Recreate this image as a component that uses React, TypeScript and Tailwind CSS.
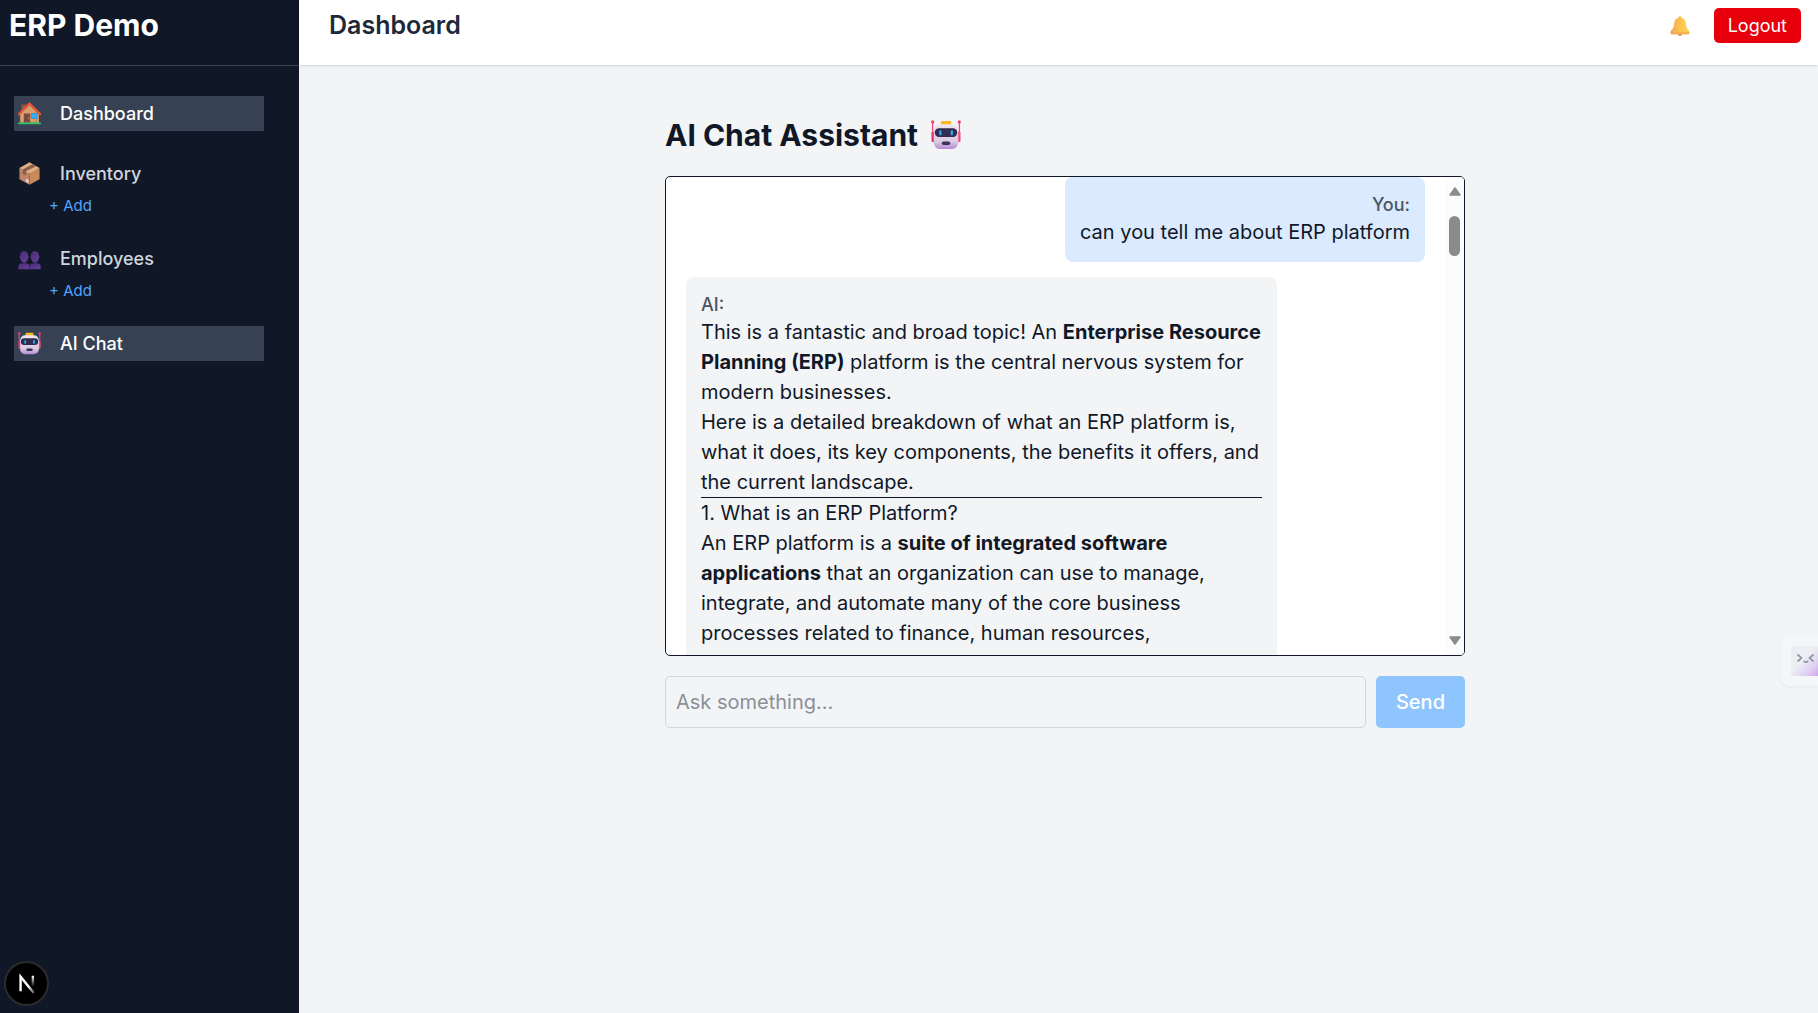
import React from "react";

function HouseIcon({ className }: { className: string }) {
  return (
    <svg viewBox="0 0 32 32" className={className} aria-hidden="true">
      <path d="M5 3h6v13H5z" fill="#8b5e45" />
      <path d="M4 3h8v2H4z" fill="#75483a" />
      <path d="M3 17 16 4l13 13v12H3z" fill="#d9a06f" />
      <path d="M16 4 29 17v12h-6V12z" fill="#cf9264" />
      <path d="M1 17 16 2l15 15" fill="none" stroke="#ee5335" strokeWidth="3" strokeLinecap="round" strokeLinejoin="round" />
      <path d="M8 16h9v13H8z" fill="#7c4a3d" />
      <circle cx="15" cy="23" r="1" fill="#d9a06f" />
      <rect x="19" y="16" width="7.5" height="7" fill="#38aef5" stroke="#2a8bdc" strokeWidth="1" />
      <rect y="28.5" x="0" width="32" height="2.5" rx="1.2" fill="#33c36a" />
    </svg>
  );
}

function BoxIcon({ className }: { className: string }) {
  return (
    <svg viewBox="0 0 32 32" className={className} aria-hidden="true">
      <path d="M2 8.5 16 15v16.5L2 24z" fill="#bd8468" />
      <path d="M30 8.5 16 15v16.5L30 24z" fill="#c88a58" />
      <path d="M16 .5 30 8.5 16 16 2 8.5z" fill="#e0b183" />
      <path d="M20 3 6.500 10.600v6l4.500 2.200v-6L25 5.800z" fill="#8a5d4c" />
      <path d="m11 23 4 2v4.500l-4-2z" fill="#e6ced4" />
    </svg>
  );
}

function PeopleIcon({ className }: { className: string }) {
  return (
    <svg viewBox="0 0 32 32" className={className} aria-hidden="true">
      <defs>
        <linearGradient id="bust" x1="0" x2="1" y1="0" y2="1">
          <stop offset="0" stopColor="#4b2d73" />
          <stop offset="1" stopColor="#65409a" />
        </linearGradient>
      </defs>
      <g fill="url(#bust)">
        <path d="M8.500 6C4.500 6 3 8.500 3 12c-1 0-1 4 .3 4 .7 4 2.700 6 5.200 6s4.500-2 5.200-6c1.300 0 1.300-4 .3-4 0-3.500-1.500-6-5.500-6z" />
        <path d="M23.500 6C19.500 6 18 8.500 18 12c-1 0-1 4 .3 4 .7 4 2.700 6 5.200 6s4.500-2 5.200-6c1.300 0 1.300-4 .3-4 0-3.500-1.500-6-5.500-6z" />
        <path d="M.5 31v-4c0-3 2.500-4.500 5.500-4.500h5c3 0 5 1.500 5 4.500v4z" />
        <path d="M16.500 31v-4c0-3 2-4.500 5-4.500h4.500c3 0 5.500 1.500 5.500 4.500v4z" />
      </g>
    </svg>
  );
}

function RobotIcon({ className }: { className: string }) {
  return (
    <svg viewBox="0 0 32 32" className={className} aria-hidden="true">
      <defs>
        <linearGradient id="robotHead" x1="0" x2="0" y1="0" y2="1">
          <stop offset="0" stopColor="#eee6ee" />
          <stop offset=".7" stopColor="#d9cbe2" />
          <stop offset="1" stopColor="#b58ad3" />
        </linearGradient>
      </defs>
      <path d="M1.700 2v12M30.300 2v12" stroke="#f0487c" strokeWidth="1.400" />
      <circle cx="1.800" cy="2" r="1.700" fill="#f23a6b" />
      <circle cx="30.200" cy="2" r="1.700" fill="#f23a6b" />
      <rect x=".5" y="12.500" width="4" height="11" rx="1.500" fill="#e8336d" />
      <rect x="27.500" y="12.500" width="4" height="11" rx="1.500" fill="#f04f86" />
      <rect x="10.500" y="1" width="11" height="5" rx="1.500" fill="#f9b91f" />
      <rect x="3" y="4.500" width="26" height="26.500" rx="7" fill="url(#robotHead)" />
      <rect x="4" y="8.800" width="24" height="9.400" rx="4.500" fill="#322b52" />
      <rect x="8.800" y="11" width="2.400" height="5.500" rx="1.200" fill="#23b1ee" />
      <rect x="21" y="11" width="2.400" height="5.500" rx="1.200" fill="#23b1ee" />
      <rect x="11.500" y="23" width="9" height="3.600" rx="1.800" fill="#3c3156" />
    </svg>
  );
}

function BellIcon({ className }: { className: string }) {
  return (
    <svg viewBox="0 0 32 32" className={className} aria-hidden="true">
      <defs>
        <linearGradient id="bell" x1="0" x2="1">
          <stop offset="0" stopColor="#f5a35c" />
          <stop offset=".5" stopColor="#fcc34d" />
          <stop offset="1" stopColor="#fbd45a" />
        </linearGradient>
      </defs>
      <circle cx="16" cy="29" r="3" fill="#e88a55" />
      <circle cx="16" cy="3" r="2.500" fill="#f3a44f" />
      <path d="M16 2.500c-5.500 0-8.800 4-9.300 9.500C6.300 17 5.500 19.500 2.500 22.500.5 24.500 0 29 2 29h28c2 0 1.500-4.500-.5-6.500-3-3-3.800-5.500-4.200-10.500-.5-5.500-3.800-9.500-9.300-9.500z" fill="url(#bell)" />
      <path d="M1.500 26.500h29c0 1.500 0 2.500-1 2.500h-27c-1 0-1-1-1-2.500z" fill="#f2a84b" />
    </svg>
  );
}

type IconType = (props: { className: string }) => React.ReactElement;

function NavItem({ icon: Icon, label, active = false, add = false }: { icon: IconType; label: string; active?: boolean; add?: boolean }) {
  return (
    <li>
      <a
        href="#"
        className={
          active
            ? "flex h-[35px] items-center gap-[19px] bg-[#364153] pl-1 text-[18px] font-medium text-white"
            : "flex h-[35px] items-center gap-[19px] pl-1 text-[18px] font-medium text-gray-300"
        }
      >
        <Icon className="size-[23px] shrink-0" />
        {label}
      </a>
      {add && (
        <a href="#" className="mt-[5px] ml-[35px] block text-[15px] leading-5 text-[#51a2ff]">
          + Add
        </a>
      )}
    </li>
  );
}

function Sidebar() {
  return (
    <aside className="flex w-[299px] shrink-0 flex-col bg-[#101828]">
      <div className="h-[66px] border-b border-[#364153] pt-[5px] pl-[9px]">
        <h1 className="text-[30px] leading-10 font-bold text-white">ERP Demo</h1>
      </div>
      <nav className="pt-[30px] pr-[35px] pl-3.5">
        <ul className="flex flex-col gap-[25px]">
          <NavItem icon={HouseIcon} label="Dashboard" active />
          <NavItem icon={BoxIcon} label="Inventory" add />
          <NavItem icon={PeopleIcon} label="Employees" add />
          <NavItem icon={RobotIcon} label="AI Chat" active />
        </ul>
      </nav>
    </aside>
  );
}

function Header() {
  return (
    <header className="flex h-[65px] items-start justify-between bg-white pt-2 pr-[17px] pl-[30px] shadow">
      <h2 className="text-[25px] leading-[35px] font-semibold text-[#1e2939]">Dashboard</h2>
      <div className="flex items-center gap-6">
        <button type="button" aria-label="Notifications">
          <BellIcon className="size-5" />
        </button>
        <button type="button" className="h-[35px] rounded-[5px] bg-[#e7000b] px-3.5 text-[18px] text-white">
          Logout
        </button>
      </div>
    </header>
  );
}

function Scrollbar() {
  return (
    <div className="flex w-[19px] shrink-0 flex-col items-center bg-[#fcfcfc] pt-2.5 pb-2.5" aria-hidden="true">
      <svg viewBox="0 0 12 9" className="h-[9px] w-3">
        <path d="M6 1 11 8H1z" fill="#8b8b8b" stroke="#8b8b8b" strokeWidth="1.500" strokeLinejoin="round" />
      </svg>
      <div className="mt-5 h-10 w-[11px] rounded-full bg-[#8b8b8b]" />
      <svg viewBox="0 0 12 9" className="mt-auto h-[9px] w-3">
        <path d="M6 8 11 1H1z" fill="#8b8b8b" stroke="#8b8b8b" strokeWidth="1.500" strokeLinejoin="round" />
      </svg>
    </div>
  );
}

function Chat() {
  return (
    <section className="mx-auto w-full max-w-[800px]">
      <h2 className="flex items-center gap-[13px] text-[30px] leading-10 font-bold text-[#101828]">
        AI Chat Assistant
        <RobotIcon className="size-[30px]" />
      </h2>
      <div className="mt-[21px] flex h-[480px] overflow-hidden rounded-[5px] border border-[#101828] bg-white">
        <div className="flex min-w-0 flex-1 flex-col gap-[15px] overflow-hidden px-5 text-[20px] leading-[30px]">
          <div className="shrink-0 self-end rounded-[8px] bg-[#dbeafe] p-[15px] text-right">
            <p className="text-[18px] leading-[25px] font-medium text-[#4a5565]">You:</p>
            <p>can you tell me about ERP platform</p>
          </div>
          <div className="w-[591px] max-w-full shrink-0 self-start rounded-t-[8px] bg-[#f3f4f6] p-[15px]">
            <p className="text-[18px] leading-[25px] font-medium text-[#4a5565]">AI:</p>
            <p>
              This is a fantastic and broad topic! An <strong>Enterprise Resource Planning (ERP)</strong> platform is the
              central nervous system for modern businesses.
            </p>
            <p>
              Here is a detailed breakdown of what an ERP platform is, what it does, its key components, the benefits it
              offers, and the current landscape.
            </p>
            <hr className="border-[#101828]" />
            <h3>1. What is an ERP Platform?</h3>
            <p>
              An ERP platform is a <strong>suite of integrated software applications</strong> that an organization can use
              to manage, integrate, and automate many of the core business processes related to finance, human resources,
            </p>
          </div>
        </div>
        <Scrollbar />
      </div>
      <form className="mt-5 flex gap-2.5" onSubmit={(e) => e.preventDefault()}>
        <input
          type="text"
          aria-label="Ask something"
          placeholder="Ask something..."
          className="h-[52px] min-w-0 flex-1 rounded-[5px] border border-[#d1d5dc] px-2.5 text-[20px] placeholder:text-[#8b8f98]"
        />
        <button type="submit" className="h-[52px] rounded-[5px] bg-[#8ec5ff] px-5 text-[20px] font-medium text-white">
          Send
        </button>
      </form>
    </section>
  );
}

function DevBadge() {
  return (
    <button type="button" aria-label="Open developer tools" className="fixed bottom-[7px] left-1 size-[45px] rounded-full border-2 border-[#2b2b2b] bg-black">
      <svg viewBox="0 0 45 45" className="size-full" aria-hidden="true">
        <defs>
          <linearGradient id="nDiag" x1="24" y1="26" x2="32" y2="34" gradientUnits="userSpaceOnUse">
            <stop stopColor="#fff" />
            <stop offset="1" stopColor="#fff" stopOpacity=".2" />
          </linearGradient>
          <linearGradient id="nStem" x1="0" y1="14" x2="0" y2="26" gradientUnits="userSpaceOnUse">
            <stop stopColor="#fff" />
            <stop offset="1" stopColor="#fff" stopOpacity="0" />
          </linearGradient>
        </defs>
        <path d="M16 31V15L30.500 33" fill="none" stroke="url(#nDiag)" strokeWidth="2.600" />
        <path d="M29.500 14v13" stroke="url(#nStem)" strokeWidth="2.600" />
      </svg>
    </button>
  );
}

function AssistantTab() {
  return (
    <button type="button" aria-label="Open assistant" className="fixed top-[636px] right-0 h-[50px] w-[37px] rounded-l-[8px] bg-[#f5f6f8] py-2.5 pl-2.5 shadow-[0_1px_3px_rgba(0,0,0,0.06)]">
      <svg viewBox="0 0 27 30" className="h-[30px] w-[27px]" aria-hidden="true">
        <defs>
          <linearGradient id="tab" x1="6" y1="8" x2="30" y2="32" gradientUnits="userSpaceOnUse">
            <stop offset=".25" stopColor="#eceef4" />
            <stop offset=".6" stopColor="#dfd0f3" />
            <stop offset="1" stopColor="#c79aee" />
          </linearGradient>
        </defs>
        <path d="M3 0h24v30H3a3 3 0 0 1-3-3V3a3 3 0 0 1 3-3z" fill="url(#tab)" />
        <path d="m6.500 8.500 4 3.500-4 3.500M22.500 8.500l-4 3.500 4 3.500M13 14.800c.5 1.800 3.500 1.800 4 0" fill="none" stroke="#9296a4" strokeWidth="1.700" />
      </svg>
    </button>
  );
}

export default function App() {
  return (
    <div className="flex min-h-screen bg-[#f3f4f6] font-['Inter',sans-serif] text-[#101828]">
      <Sidebar />
      <div className="flex min-w-0 flex-1 flex-col">
        <Header />
        <main className="flex-1 pt-[50px] pr-5 pb-10 pl-[33px]">
          <Chat />
        </main>
      </div>
      <DevBadge />
      <AssistantTab />
    </div>
  );
}
